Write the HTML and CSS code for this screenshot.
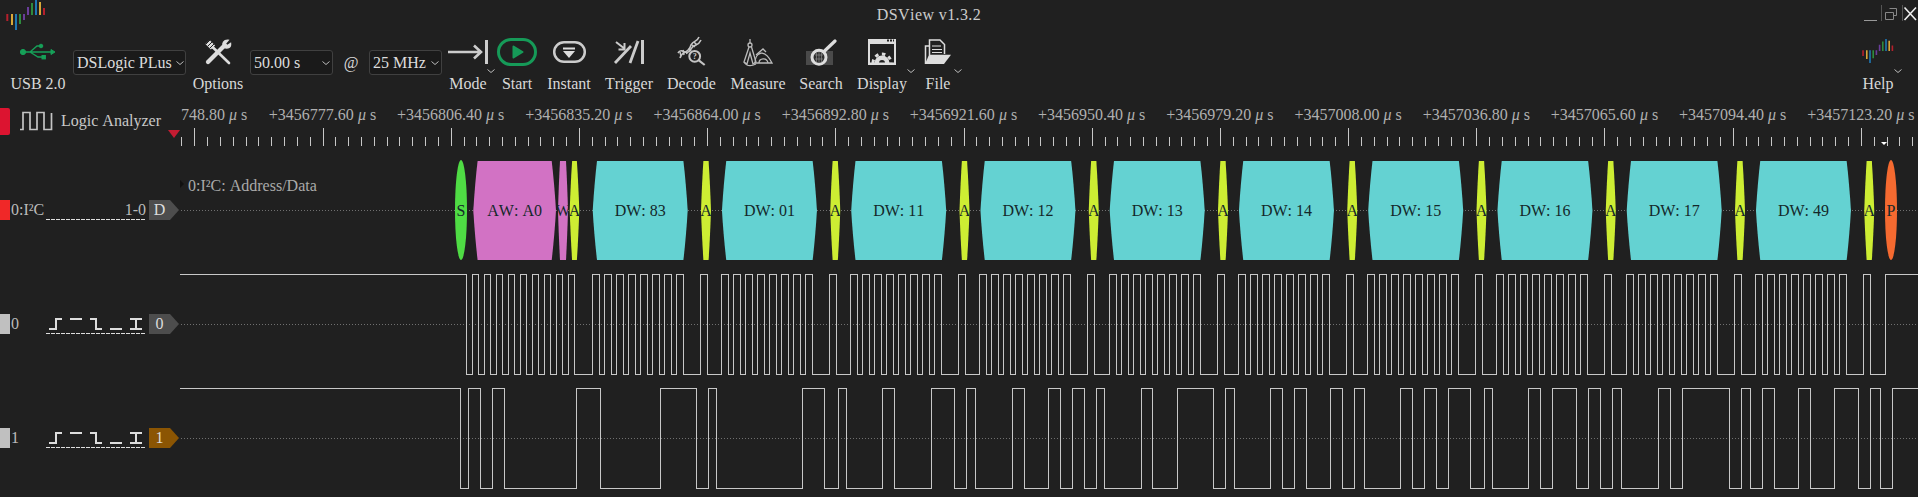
FILE: index.html
```html
<!DOCTYPE html>
<html lang="en">
<head>
  <meta charset="UTF-8">
  <title>DSView v1.3.2</title>
  <link rel="stylesheet" href="styles.css">
</head>
<body>

  <svg class="defs" width="0" height="0">
    <symbol id="logo" viewBox="0 0 40 31">
      <g fill="none" stroke-width="2">
        <path stroke="#b5202c" d="M1.3 14V21M38 8V15"/>
        <path stroke="#d9a93a" d="M6 14V25M34 2V15"/>
        <path stroke="#1f77b4" d="M10 14V30M30 0V15"/>
        <path stroke="#2e8b3d" d="M14 14V24M26 3V15"/>
        <path stroke="#6a3d9a" d="M18 14V20M22 7V15"/>
      </g>
    </symbol>
    <symbol id="chevron" viewBox="0 0 8 4">
      <path d="M.5 .5L4 3.5L7.5 .5" fill="none" stroke="#bbb"/>
    </symbol>
    <symbol id="trig" viewBox="0 0 93 12">
      <path d="M0 11H7V1H13M21 1H33M41 1H47V11H53M61 11H73M81 1H93M81 11H93M87 1V11" fill="none" stroke="#ddd" stroke-width="2"/>
    </symbol>
  </svg>

  <div class="titlebar">
    <svg class="logo"><use href="#logo"/></svg>
    <div class="title">DSView v1.3.2</div>
    <svg class="winbtns" width="53" height="32" viewBox="0 0 53 32">
      <path d="M0 20.5H13" stroke="#999" fill="none"/>
      <path d="M17.5 5V21M38.5 5V21" stroke="#555" fill="none"/>
      <path d="M25.5 8.5H32.5V15.5H30M21.5 12.5H29.5V19.5H21.5Z" stroke="#888" fill="none"/>
      <path d="M40.5 7.5L52 20M52 7.5L40.5 20" stroke="#eee" stroke-width="1.6" fill="none"/>
    </svg>
  </div>

  <div class="toolbar">
    <div class="tool tool-usb">
      <svg class="icon" width="36" height="32" viewBox="0 0 36 32">
        <g fill="#16a058" stroke="#16a058">
          <circle cx="3" cy="16" r="2.6"/>
          <path d="M3 16H31M10 16L17 10H20M10 16L18 21H22" fill="none" stroke-width="1.4"/>
          <circle cx="21" cy="10" r="1.8"/>
          <rect x="22" y="19.5" width="3.4" height="3.4"/>
          <path d="M31 13.5L35 16L31 18.5Z"/>
        </g>
      </svg>
      <span class="tool-label">USB 2.0</span>
    </div>

    <div class="combo combo-device">DSLogic PLus<svg class="combo-arrow"><use href="#chevron"/></svg></div>

    <div class="tool tool-options">
      <svg class="icon" width="28" height="32" viewBox="0 0 28 32">
        <g fill="none" stroke="#ddd" stroke-linecap="round">
          <path d="M4 26L19 11" stroke-width="4.2"/>
          <path d="M19.5 11C17.5 7.5 20 4 24 4.3L21.3 7.5L23 9.8L26.5 7.5C27 11.5 23.5 13 19.5 11Z" fill="#ddd" stroke-width="1.5"/>
          <path d="M3.5 6L9 11.5" stroke-width="6" stroke-linecap="butt"/>
          <path d="M2 8L7 3M4 10L9 5M6 12L11 7" stroke="#202020" stroke-width="1"/>
          <path d="M9 11.5L25 27" stroke-width="2.6"/>
        </g>
      </svg>
      <span class="tool-label">Options</span>
    </div>

    <div class="combo combo-time">50.00 s<svg class="combo-arrow"><use href="#chevron"/></svg></div>
    <div class="at">@</div>
    <div class="combo combo-rate">25 MHz<svg class="combo-arrow"><use href="#chevron"/></svg></div>

    <div class="tool tool-mode">
      <svg class="icon" width="42" height="32" viewBox="0 0 42 32">
        <g fill="none" stroke="#ccc" stroke-width="2.6">
          <path d="M1 16H34M27 9.5L34 16L27 22.5"/>
          <path d="M39.5 4V28" stroke-width="3"/>
        </g>
      </svg>
      <span class="tool-label">Mode</span>
      <svg class="menu-arrow"><use href="#chevron"/></svg>
    </div>

    <div class="tool tool-start">
      <svg class="icon" width="42" height="32" viewBox="0 0 42 32">
        <rect x="2.5" y="3.5" width="37" height="25" rx="12.5" fill="none" stroke="#169a58" stroke-width="3"/>
        <path d="M17.5 10.5L26.5 16L17.5 21.5Z" fill="#169a58" stroke="#169a58" stroke-width="2" stroke-linejoin="round"/>
      </svg>
      <span class="tool-label">Start</span>
    </div>

    <div class="tool tool-instant">
      <svg class="icon" width="36" height="32" viewBox="0 0 36 32">
        <rect x="3.2" y="6.2" width="30.6" height="19.6" rx="9.8" fill="none" stroke="#ccc" stroke-width="2.5"/>
        <path d="M12 11.5H24V13.5H12ZM12 15H24L18 22Z" fill="#ddd"/>
      </svg>
      <span class="tool-label">Instant</span>
    </div>

    <div class="tool tool-trigger">
      <svg class="icon" width="32" height="32" viewBox="0 0 32 32">
        <g fill="none" stroke="#ccc" stroke-width="2.8">
          <path d="M29.5 4V28" stroke-width="3"/>
          <path d="M2 27L18 10M17 27L25 5"/>
          <path d="M3 6L12 13M11.5 7V13.5H5.500" stroke-width="2"/>
        </g>
      </svg>
      <span class="tool-label">Trigger</span>
    </div>

    <div class="tool tool-decode">
      <svg class="icon" width="30" height="32" viewBox="0 0 30 32">
        <g fill="none" stroke="#c4c4c4" stroke-width="1.6">
          <path d="M1 17C5 10 9 22 14 13C17 7 21 11 24 4"/>
          <path d="M3 22C5 14 11 19 14 9C17 4 20 6 22 1"/>
          <path d="M3 16L4 20M6 14L7 19M9 15L10 18M12 12L14 15M15 9L18 11M17 6L20 9" stroke-width="1.5"/>
          <circle cx="17.7" cy="20.3" r="5.4" fill="#202020" stroke-width="2"/>
          <path d="M21.5 24.2L27.7 29" stroke-width="2.2"/>
        </g>
        <text class="icon-q" x="17.7" y="23">?</text>
      </svg>
      <span class="tool-label">Decode</span>
    </div>

    <div class="tool tool-measure">
      <svg class="icon" width="32" height="32" viewBox="0 0 32 32">
        <g fill="none" stroke="#bbb" stroke-width="1.3">
          <path d="M13 27C13 17 22 11 30 27Z"/>
          <path d="M17 27C17 22 25 21 26 27M14 19L21 13L24 16"/>
          <path d="M8 3V7"/>
          <circle cx="8" cy="9" r="2"/>
          <path d="M7 11L2 26L5 28L8 17L11 28L14 26L9.5 11"/>
          <path d="M2 26C5 31 10 30 14 28"/>
        </g>
      </svg>
      <span class="tool-label">Measure</span>
    </div>

    <div class="tool tool-search">
      <svg class="icon" width="32" height="32" viewBox="0 0 32 32">
        <rect class="icon-hatch" x="1" y="15" width="27" height="14"/>
        <circle cx="14" cy="21.3" r="7" fill="#2e2e2e" stroke="#ddd" stroke-width="3"/>
        <path d="M10 19H18M10 23H18M14 16V26M11.5 16.5V26M16.5 16.5V26" stroke="#888" fill="none" stroke-width=".7"/>
        <path d="M19 15.5L30 5" stroke="#ddd" stroke-width="3.2" stroke-linecap="round"/>
      </svg>
      <span class="tool-label">Search</span>
    </div>

    <div class="tool tool-display">
      <svg class="icon" width="30" height="32" viewBox="0 0 30 32">
        <clipPath id="gearClip"><rect x="2" y="8" width="26" height="20"/></clipPath>
        <rect x="2" y="4" width="26" height="24" fill="none" stroke="#ddd" stroke-width="2"/>
        <rect x="2" y="3" width="26" height="5" fill="#ddd"/>
        <path d="M20 4.5H22M23 4.5H25M26 4.5H27" stroke="#202020" stroke-width="2"/>
        <g clip-path="url(#gearClip)">
          <circle cx="15" cy="27" r="7.5" fill="#ddd"/>
          <circle cx="15" cy="27" r="9" fill="none" stroke="#ddd" stroke-width="3" stroke-dasharray="3.5 3.5"/>
          <circle cx="15" cy="27" r="3" fill="#202020"/>
        </g>
        <rect x="2" y="26.5" width="26" height="2" fill="#ddd"/>
      </svg>
      <span class="tool-label">Display</span>
      <svg class="menu-arrow"><use href="#chevron"/></svg>
    </div>

    <div class="tool tool-file">
      <svg class="icon" width="28" height="32" viewBox="0 0 28 32">
        <g fill="none" stroke="#ddd" stroke-width="1.5">
          <path d="M1.5 28V10H5"/>
          <path d="M5.5 19V4H16L20.5 8.5V18"/>
          <path d="M8 10H17M8 13.5H18M8 16.5H18" stroke-width="1.2"/>
        </g>
        <path d="M5 18.7H27L20 28H1Z" fill="#ddd"/>
      </svg>
      <span class="tool-label">File</span>
      <svg class="menu-arrow"><use href="#chevron"/></svg>
    </div>

    <div class="toolbar-fill"></div>

    <div class="tool tool-help">
      <svg class="icon" width="32" height="32" viewBox="0 0 32 32"><use href="#logo" y="3" width="32" height="25"/></svg>
      <span class="tool-label">Help</span>
      <svg class="menu-arrow"><use href="#chevron"/></svg>
    </div>
  </div>

  <div class="main">
    <div class="side">
      <div class="mode-row">
        <div class="mode-swatch"></div>
        <svg class="mode-icon" width="33" height="20" viewBox="0 0 33 20">
          <path d="M0 18.5H3V1.500H10V18.500H17V1.500H24V18.500H31.500V2" fill="none" stroke="#c4c4c4" stroke-width="1.700"/>
        </svg>
        <span class="mode-name">Logic Analyzer</span>
        <div class="mode-caret"></div>
      </div>

      <div class="trace">
        <div class="swatch swatch-red"></div>
        <div class="trace-name">0:I²C</div>
        <div class="trace-set"><span>1-0</span></div>
        <div class="tag">D</div>
      </div>
      <div class="trace">
        <div class="swatch"></div>
        <div class="trace-name">0</div>
        <div class="trace-set"><svg class="trig"><use href="#trig"/></svg></div>
        <div class="tag">0</div>
      </div>
      <div class="trace">
        <div class="swatch"></div>
        <div class="trace-name">1</div>
        <div class="trace-set"><svg class="trig"><use href="#trig"/></svg></div>
        <div class="tag tag-brown">1</div>
      </div>
    </div>

    <div class="view">
      <svg id="ruler" class="ruler" width="1738" height="54" viewBox="180 96 1738 54"></svg>
      <svg id="waves" class="waves" width="1738" height="347" viewBox="180 150 1738 347"></svg>
    </div>
  </div>

  <script src="script.js"></script>
</body>
</html>
```

FILE: styles.css
```css
html, body {
  margin: 0;
  padding: 0;
  height: 100%;
  overflow: hidden;
  background: #202020;
  color: #d8d8d8;
  font-family: "Liberation Serif", "Noto Sans CJK TC", serif;
  font-size: 16px;
  font-kerning: none;
}

.defs {
  position: absolute;
}

/* title bar */
.titlebar {
  display: flex;
  height: 32px;
}

.logo {
  width: 40px;
  height: 31px;
  margin-left: 6px;
}

.title {
  flex: 1;
  padding-right: 52px;
  text-align: center;
  line-height: 30px;
  letter-spacing: .4px;
  color: #ccc;
}

.winbtns {
  margin-right: 1px;
}

/* toolbar */
.toolbar {
  display: flex;
  align-items: flex-start;
  height: 64px;
  padding: 0 20px 0 9px;
}

.toolbar-fill {
  flex: 1;
}

.tool {
  position: relative;
  display: flex;
  flex-direction: column;
  align-items: center;
  padding-top: 4px;
}

.icon {
  display: block;
}

.tool-label {
  margin-top: 6px;
  line-height: 20px;
  white-space: nowrap;
}

.menu-arrow {
  position: absolute;
  top: 37px;
  width: 8px;
  height: 4px;
}

.tool-usb { width: 58px; }
.tool-options { width: 64px; }
.tool-mode { width: 42px; margin-left: 5px; }
.tool-start { width: 56px; }
.tool-instant { width: 48px; }
.tool-trigger { width: 72px; }
.tool-decode { width: 53px; }
.tool-measure { width: 80px; }
.tool-search { width: 46px; }
.tool-display { width: 76px; }
.tool-file { width: 36px; }
.tool-help { width: 40px; }

.tool-mode .menu-arrow { left: 40px; }
.tool-display .menu-arrow { left: 63px; }
.tool-file .menu-arrow { left: 34px; }
.tool-help .menu-arrow { left: 36px; }

.icon-q {
  font-size: 8px;
  font-weight: bold;
  fill: #ccc;
  text-anchor: middle;
}

.icon-hatch {
  fill: #4a4a4a;
}

.combo {
  position: relative;
  box-sizing: border-box;
  height: 25px;
  margin-top: 18px;
  padding-left: 3px;
  line-height: 24px;
  color: #ddd;
  background: #1a1a1a;
  border: 1px solid #404040;
  border-radius: 3px;
}

.combo-device { width: 113px; margin-left: 6px; }
.combo-time { width: 83px; }
.combo-rate { width: 73px; }

.combo-arrow {
  position: absolute;
  right: 1px;
  top: 10px;
  width: 8px;
  height: 4px;
}

.combo-time .combo-arrow { right: 2px; }
.combo-rate .combo-arrow { right: 2px; }

.at {
  width: 36px;
  margin-top: 18px;
  line-height: 25px;
  text-align: center;
}

/* main area */
.main {
  display: flex;
}

.side {
  flex: 0 0 180px;
}

.view {
  flex: 0 0 1738px;
}

.ruler, .waves {
  display: block;
}

.mode-row {
  position: relative;
  display: flex;
  align-items: center;
  height: 50px;
  margin-bottom: 7px;
}

.mode-swatch {
  width: 10px;
  height: 27px;
  background: #dc1430;
  border-radius: 0 2px 2px 0;
}

.mode-icon {
  margin-left: 10px;
}

.mode-name {
  margin-left: 8px;
  color: #c8c8c8;
}

.mode-caret {
  position: absolute;
  right: 0;
  top: 34px;
  width: 12px;
  height: 8px;
  background: #c41c32;
  clip-path: polygon(0 0, 100% 0, 50% 100%);
}

.trace {
  display: flex;
  align-items: center;
  height: 114px;
  color: #bbb;
}

.swatch {
  width: 10px;
  height: 20px;
  background: #c0c0c0;
}

.swatch-red {
  background: #f02828;
}

.trace-name {
  width: 36px;
  padding-left: 1px;
  box-sizing: border-box;
}

.trace-set {
  display: flex;
  align-items: center;
  justify-content: flex-end;
  box-sizing: border-box;
  width: 100px;
  height: 20px;
  line-height: 18px;
  background: repeating-linear-gradient(to right, #ddd 0 4px, transparent 4px 5px) bottom / 100% 1px no-repeat;
}

.trig {
  width: 93px;
  height: 12px;
  margin-right: 4px;
  margin-bottom: 1px;
}

.tag {
  width: 30px;
  height: 20px;
  margin-left: 3px;
  padding-right: 9px;
  box-sizing: border-box;
  line-height: 20px;
  text-align: center;
  color: #ddd;
  background: #4d4d4d;
  clip-path: polygon(0 0, 70% 0, 100% 50%, 70% 100%, 0 100%);
}

.tag-brown {
  background: #8b5503;
}

/* svg drawn by script.js */
.ruler-label {
  font-size: 16px;
  fill: #b0b0b0;
  text-anchor: middle;
}

.ruler-first {
  text-anchor: start;
}

.ruler-mu {
  font-style: italic;
}

.tick {
  stroke: #c8c8c8;
  shape-rendering: crispEdges;
}

.midline {
  stroke: #707070;
  stroke-dasharray: 1 2;
  shape-rendering: crispEdges;
}

.wave {
  fill: none;
  stroke: #c8c8c8;
  shape-rendering: crispEdges;
}

.decode-title {
  font-size: 16px;
  fill: #aaa;
}

.decode-text {
  font-size: 16px;
  fill: #14282a;
  text-anchor: middle;
}
```

FILE: script.js
```js
const NS = "http://www.w3.org/2000/svg";

function el(parent, name, attrs, text) {
  const node = document.createElementNS(NS, name);
  for (const key in attrs) node.setAttribute(key, attrs[key]);
  if (text !== undefined) node.textContent = text;
  parent.appendChild(node);
  return node;
}

function rulerLabel(text, attrs) {
  const label = el(ruler, "text", attrs, text + " ");
  el(label, "tspan", { class: "ruler-mu" }, "μ");
  label.appendChild(document.createTextNode(" s"));
}

// ruler: one label every 128.2px, ten divisions between labels
const ruler = document.getElementById("ruler");
const MAJOR = 128.2;

// the first label runs under the left panel, only its tail shows
rulerLabel("748.80", { class: "ruler-label ruler-first", x: 181, y: 120 });
for (let k = 1; k < 14; k++) {
  const x = 194.3 + MAJOR * k;
  const value = (3456748.8 + 28.8 * k).toFixed(2);
  rulerLabel("+" + value, { class: "ruler-label", x: x, y: 120 });
}
for (let k = -1; k < 135; k++) {
  const x = Math.round(194.3 + MAJOR / 10 * k) + 0.5;
  const top = k % 10 === 0 ? 128 : 137;
  el(ruler, "line", { class: "tick", x1: x, x2: x, y1: top, y2: 146 });
}
el(ruler, "path", { d: "M1881 142H1887L1884 145Z", fill: "#fff" });

// traces
const waves = document.getElementById("waves");
[210.5, 324.5, 438.5].forEach(y => {
  el(waves, "line", { class: "midline", x1: 181, x2: 1918, y1: y, y2: y });
});

el(waves, "path", { d: "M180 180L184 184L180 188Z", fill: "#111" });
el(waves, "text", { class: "decode-title", x: 188, y: 191 }, "0:I²C: Address/Data");

const TOP = 161, BOTTOM = 260, MID = 210.5;
const CYAN = "#64d2d2", PINK = "#d272c4", YELLOW = "#cded33";

function cell(x0, x1, cap, fill, text) {
  // sides bow out a little on their way to the point
  const a = x0 + cap, b = x1 - cap, bow = cap * 0.4;
  const d = `M${x0} ${MID}Q${x0 + bow} ${TOP + 22} ${a} ${TOP}H${b}Q${x1 - bow} ${TOP + 22} ${x1} ${MID}` +
    `Q${x1 - bow} ${BOTTOM - 22} ${b} ${BOTTOM}H${a}Q${x0 + bow} ${BOTTOM - 22} ${x0} ${MID}Z`;
  el(waves, "path", { d: d, fill: fill });
  // the label is cut off at the cell's edge
  const clip = el(waves, "svg", { x: x0, y: TOP, width: x1 - x0, height: BOTTOM - TOP, viewBox: [x0, TOP, x1 - x0, BOTTOM - TOP].join(" ") });
  el(clip, "text", { class: "decode-text", x: (x0 + x1) / 2, y: 216 }, text);
}

function dot(cx, fill, text) {
  el(waves, "ellipse", { cx: cx, cy: 210, rx: 6, ry: 50, fill: fill });
  el(waves, "text", { class: "decode-text", x: cx, y: 216 }, text);
}

dot(461, "#4fdc44", "S");
cell(473.3, 556, 4.3, PINK, "AW: A0");
cell(558, 568, 2, PINK, "W");
cell(569.7, 579.3, 2.4, YELLOW, "A");

const BYTES = ["83", "01", "11", "12", "13", "14", "15", "16", "17", "49"];
const PERIOD = 129.25;
BYTES.forEach((b, i) => {
  const x = 592.7 + PERIOD * i;
  cell(x, x + 95, 4.3, CYAN, "DW: " + b);
  cell(x + 108.3, x + 118.3, 2.4, YELLOW, "A");
});
dot(1891, "#f56a30", "P");

// a path from a high level through a list of edges, first edge falling
function wave(hi, lo, edges) {
  let y = hi;
  let d = "M180 " + (hi + 0.5);
  edges.forEach(e => {
    const x = Math.round(e) + 0.5;
    y = y === hi ? lo : hi;
    d += "H" + x + "V" + (y + 0.5);
  });
  d += "H1918";
  el(waves, "path", { class: "wave", d: d });
}

// SCL
const scl = [466];
for (let k = 0; k < 9; k++) scl.push(472.3 + 12 * k, 478.3 + 12 * k);
for (let i = 0; i < BYTES.length; i++) {
  const s = 591.7 + PERIOD * i;
  for (let k = 0; k < 8; k++) scl.push(s + 12 * k, s + 12 * k + 7);
  scl.push(s + 108, s + 115);
}
scl.push(1884.7);
wave(274, 374, scl);

// SDA, edges read off the capture
wave(388, 488, [
  460.3, 468.3, 480.3, 492.3, 504.3, 575.7, 599.7, 659.7, 695.7, 707.7,
  716.3, 801.7, 824.3, 837.7, 846.3, 882.3, 894.3, 930.7, 954.3, 966.3,
  975.3, 1011.7, 1023.7, 1047.7, 1059.7, 1071.7, 1083.7, 1095.7, 1104.3, 1140.7,
  1152.3, 1176.7, 1212.7, 1224.7, 1233.7, 1270.3, 1282.3, 1294.3, 1306.3, 1330.3,
  1341.7, 1354.3, 1363.7, 1399.7, 1411.7, 1423.7, 1435.7, 1447.7, 1470.3, 1483.7,
  1492.3, 1528.3, 1540.3, 1552.3, 1576.3, 1588.3, 1599.7, 1612.3, 1621.3, 1657.7,
  1669.7, 1681.7, 1728.7, 1741.3, 1750.3, 1762.3, 1774.3, 1798.3, 1810.3, 1834.3,
  1858.3, 1869.7, 1879.7, 1891.7
]);
```
